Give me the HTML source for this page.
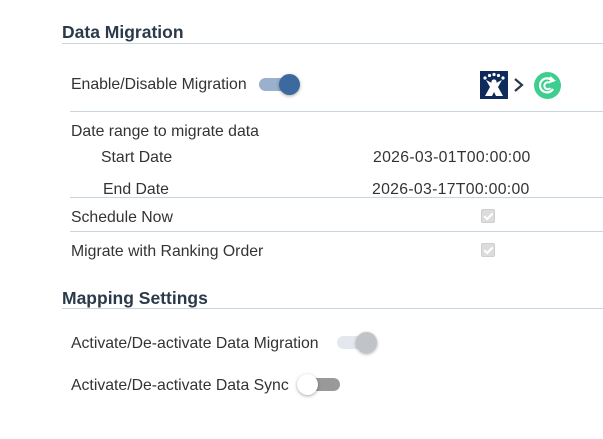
<!DOCTYPE html>
<html><head><meta charset="utf-8"><style>
body{margin:0;width:603px;height:439px;background:#fff;font-family:"Liberation Sans",sans-serif;color:#333;position:relative;overflow:hidden}
.t{position:absolute;font-size:15.8px;line-height:18px;white-space:nowrap}
.d{letter-spacing:0.3px}
.h{position:absolute;font-size:17.5px;font-weight:bold;color:#2b3a4a;line-height:22px}
.l{position:absolute;height:1px;background:#c9d6df;right:0}
.cb{position:absolute;width:12px;height:12px;border-radius:2px;background:#dcdcdc;border:1px solid #cfcfcf}
.cb:after{content:"";position:absolute;left:4px;top:1px;width:3px;height:7px;border:solid #fff;border-width:0 2px 2px 0;transform:rotate(45deg)}
.tr{position:absolute;height:13px;border-radius:7px}
.kn{position:absolute;width:21px;height:21px;border-radius:50%;box-shadow:0 1px 3px rgba(0,0,0,.35)}
</style></head><body>
<div class="h" style="left:62px;top:21px">Data Migration</div>
<div class="l" style="left:62px;top:43px"></div>
<div class="t" style="left:71px;top:76px">Enable/Disable Migration</div>
<div class="tr" style="left:259px;top:78px;width:38px;background:#9ab0cc"></div>
<div class="kn" style="left:279px;top:74px;background:#3d6a9e"></div>
<svg style="position:absolute;left:480px;top:71px" width="28" height="28" viewBox="0 0 28 28">
<rect width="28" height="28" fill="#0f2b5b"/>
<g fill="#fff"><circle cx="5" cy="7" r="1.6"/><circle cx="9.5" cy="4.5" r="1.6"/><circle cx="14" cy="3.5" r="1.6"/><circle cx="18.5" cy="4.5" r="1.6"/><circle cx="23" cy="7" r="1.6"/>
<path d="M6 9 L14 13 L22 9 L18 16 L23 25 L16 25 L14 21 L12 25 L5 25 L10 16 Z"/><circle cx="14" cy="11" r="2.6"/></g></svg>
<svg style="position:absolute;left:513px;top:77px" width="12" height="16" viewBox="0 0 12 16"><path d="M2 2 L9 8 L2 14" fill="none" stroke="#2b3a4a" stroke-width="2.2"/></svg>
<svg style="position:absolute;left:534px;top:72px" width="27" height="27" viewBox="0 0 27 27">
<circle cx="13.5" cy="13.5" r="13.5" fill="#3ecf8e"/>
<path d="M18 8.5 A7 7 0 1 0 19 17" fill="none" stroke="#fff" stroke-width="2.2"/>
<path d="M16 11 A3.5 3.5 0 1 0 16.5 16" fill="none" stroke="#fff" stroke-width="2"/>
<path d="M16 5 L20 8.5 L15.5 10" fill="none" stroke="#fff" stroke-width="2"/></svg>
<div class="l" style="left:70px;top:111px"></div>
<div class="t" style="left:71px;top:123px">Date range to migrate data</div>
<div class="t" style="left:101px;top:149px">Start Date</div>
<div class="t d" style="left:373px;top:149px">2026-03-01T00:00:00</div>
<div class="t" style="left:103px;top:181px">End Date</div>
<div class="t d" style="left:372px;top:181px">2026-03-17T00:00:00</div>
<div class="l" style="left:70px;top:197px"></div>
<div class="t" style="left:71px;top:209px">Schedule Now</div>
<div class="cb" style="left:481px;top:209px"></div>
<div class="l" style="left:70px;top:231px"></div>
<div class="t" style="left:71px;top:243px">Migrate with Ranking Order</div>
<div class="cb" style="left:481px;top:243px"></div>
<div class="h" style="left:62px;top:287px">Mapping Settings</div>
<div class="l" style="left:62px;top:308px"></div>
<div class="t" style="left:71px;top:335px">Activate/De-activate Data Migration</div>
<div class="tr" style="left:337px;top:336px;width:38px;background:#e4e8ee"></div>
<div class="kn" style="left:356px;top:332px;background:#c0c4c9"></div>
<div class="t" style="left:71px;top:377px">Activate/De-activate Data Sync</div>
<div class="tr" style="left:302px;top:378px;width:38px;background:#999"></div>
<div class="kn" style="left:297px;top:374px;background:#fff"></div>
</body></html>
